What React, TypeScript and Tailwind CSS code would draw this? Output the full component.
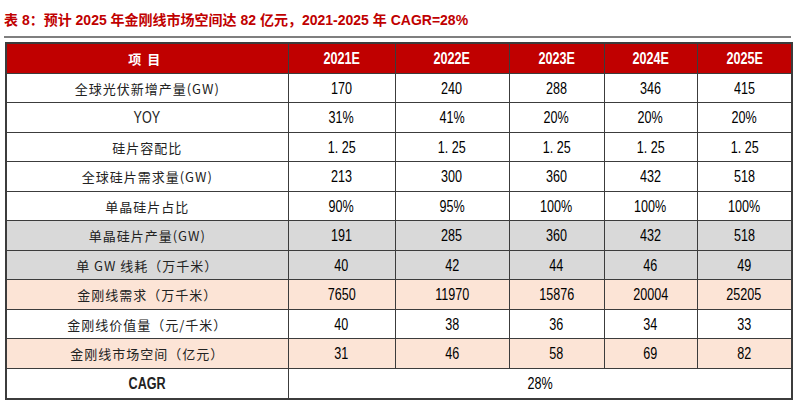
import React from "react";

type Row = { label: string; vals: string[]; bg: string };

const rows: Row[] = [
  { label: "全球光伏新增产量(GW)", vals: ["170", "240", "288", "346", "415"], bg: "bg-white" },
  { label: "YOY", vals: ["31%", "41%", "20%", "20%", "20%"], bg: "bg-white" },
  { label: "硅片容配比", vals: ["1. 25", "1. 25", "1. 25", "1. 25", "1. 25"], bg: "bg-white" },
  { label: "全球硅片需求量(GW)", vals: ["213", "300", "360", "432", "518"], bg: "bg-white" },
  { label: "单晶硅片占比", vals: ["90%", "95%", "100%", "100%", "100%"], bg: "bg-white" },
  { label: "单晶硅片产量(GW)", vals: ["191", "285", "360", "432", "518"], bg: "bg-[#d9d9d9]" },
  { label: "单 GW 线耗（万千米）", vals: ["40", "42", "44", "46", "49"], bg: "bg-[#d9d9d9]" },
  { label: "金刚线需求（万千米）", vals: ["7650", "11970", "15876", "20004", "25205"], bg: "bg-[#fce4d6]" },
  { label: "金刚线价值量（元/千米）", vals: ["40", "38", "36", "34", "33"], bg: "bg-white" },
  { label: "金刚线市场空间（亿元）", vals: ["31", "46", "58", "69", "82"], bg: "bg-[#fce4d6]" },
];

const num = "inline-block scale-x-[0.84] scale-y-[1.05] font-['Liberation_Sans',sans-serif] text-[15px]";
const cjk = "font-['Noto_Sans_CJK_SC','Liberation_Sans',sans-serif] text-[13px] tracking-[1px] text-[#222]";

export default function App() {
  return (
    <div className="w-[800px] h-[400px] bg-white px-[4px] pt-[11px] overflow-hidden">
      <div className="h-[18px] leading-[18px] text-[14px] font-bold text-[#c00000] font-['Liberation_Sans','Noto_Sans_CJK_SC',sans-serif] whitespace-nowrap">
        表 8：预计 2025 年金刚线市场空间达 82 亿元，2021-2025 年 CAGR=28%
      </div>
      <div className="mt-[7px] h-[2px] w-[787px] bg-[#7f7f7f]" />
      <table className="mt-[4px] ml-[1px] w-[786px] table-fixed border-collapse border-2 border-[#3c3c3c]">
        <colgroup>
          <col className="w-[282px]" />
          <col className="w-[107px]" />
          <col className="w-[114px]" />
          <col className="w-[95px]" />
          <col className="w-[93px]" />
          <col className="w-[95px]" />
        </colgroup>
        <thead>
          <tr className="h-[30px] bg-[#c00000] text-white">
            <th className="border border-[#3c3c3c] p-0 font-bold font-['Noto_Sans_CJK_SC',sans-serif] text-[13px] tracking-[6px]">
              项目
            </th>
            {["2021E", "2022E", "2023E", "2024E", "2025E"].map((y) => (
              <th key={y} className="border border-[#3c3c3c] p-0">
                <span className={num + " font-bold"}>{y}</span>
              </th>
            ))}
          </tr>
        </thead>
        <tbody>
          {rows.map((r) => (
            <tr key={r.label} className={"h-[29.5px] " + r.bg}>
              <td className="border border-[#3c3c3c] p-0 text-center">
                {r.label === "YOY" ? (
                  <span className={num + " text-[#222]"}>YOY</span>
                ) : (
                  <span className={cjk}>{r.label}</span>
                )}
              </td>
              {r.vals.map((v, i) => (
                <td key={i} className="border border-[#3c3c3c] p-0 text-center text-black">
                  <span className={num}>{v}</span>
                </td>
              ))}
            </tr>
          ))}
          <tr className="h-[31px] bg-white">
            <td className="border border-[#3c3c3c] p-0 text-center">
              <span className={num + " font-bold text-[#222]"}>CAGR</span>
            </td>
            <td colSpan={5} className="border border-[#3c3c3c] p-0 text-center">
              <span className={num}>28%</span>
            </td>
          </tr>
        </tbody>
      </table>
    </div>
  );
}
